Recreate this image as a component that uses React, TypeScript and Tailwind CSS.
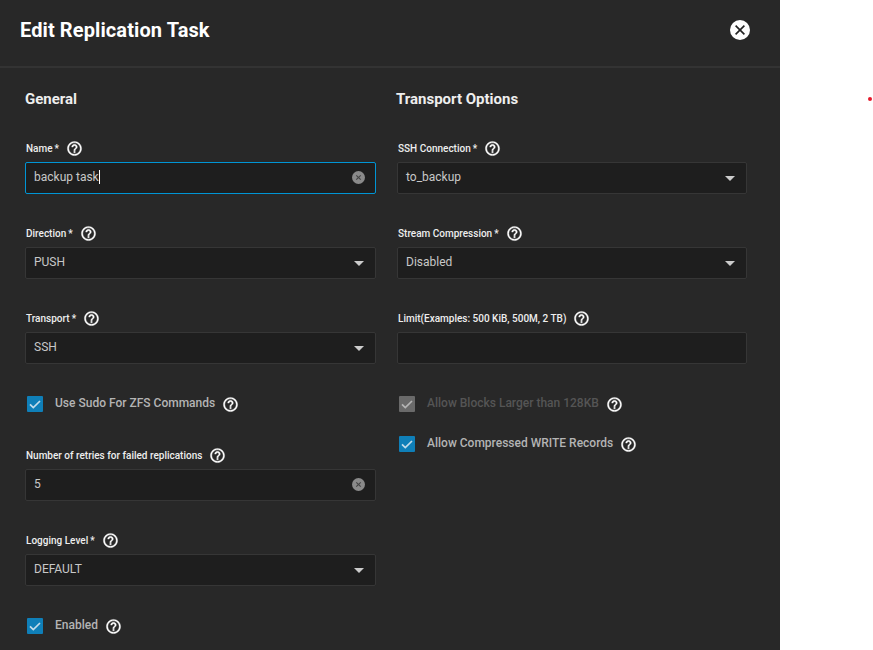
const helpPath =
  'M11 18h2v-2h-2v2zm1-16C6.48 2 2 6.48 2 12s4.48 10 10 10 10-4.48 10-10S17.52 2 12 2zm0 18c-4.41 0-8-3.59-8-8s3.59-8 8-8 8 3.59 8 8-3.59 8-8 8zm0-14c-2.21 0-4 1.79-4 4h2c0-1.1.9-2 2-2s2 .9 2 2c0 2-3 1.75-3 5h2c0-2.25 3-2.5 3-5 0-2.21-1.79-4-4-4z';

function Help({ className = '' }: { className?: string }) {
  return (
    <svg viewBox="0 0 24 24" className={`w-[17px] h-[17px] shrink-0 fill-white stroke-white stroke-[0.5] ${className}`}>
      <path d={helpPath} />
    </svg>
  );
}

function Label({ text, required }: { text: string; required?: boolean }) {
  return (
    <div className="h-5 mb-1 flex items-center pl-px text-[10px] font-medium text-[#eeeeee]">
      <span>{text}</span>
      {required && <span className="ml-[2px]">*</span>}
      <Help className="ml-[7px]" />
    </div>
  );
}

function Clear() {
  return (
    <svg viewBox="0 0 14 14" className="w-[13px] h-[13px] shrink-0 mb-px">
      <circle cx="7" cy="7" r="7" fill="#8a8a8a" />
      <path d="M4.6 4.6l4.8 4.8M9.4 4.6l-4.8 4.8" stroke="#444444" strokeWidth="1.2" />
    </svg>
  );
}

function Arrow() {
  return <div className="w-0 h-0 mr-px border-x-[5px] border-x-transparent border-t-[5px] border-t-[#cccccc]" />;
}

function Box({ focused, children }: { focused?: boolean; children?: React.ReactNode }) {
  return (
    <div
      className={`h-8 flex items-center justify-between pl-2 pr-[10px] bg-[#1e1e1e] border rounded-[2px] text-xs text-[#c8c8c8] ${
        focused ? 'border-[#0095d5]' : 'border-[#363636]'
      }`}
    >
      {children}
    </div>
  );
}

function TextField({ label, value, required, focused }: { label: string; value: string; required?: boolean; focused?: boolean }) {
  return (
    <div className="mb-[29px]">
      <Label text={label} required={required} />
      <Box focused={focused}>
        <span className="flex items-center pb-[2px]">
          {value}
          {focused && <span className="w-px h-[14px] bg-white" />}
        </span>
        {value && <Clear />}
      </Box>
    </div>
  );
}

function SelectField({ label, value, required }: { label: string; value: string; required?: boolean }) {
  return (
    <div className="mb-[29px]">
      <Label text={label} required={required} />
      <Box>
        <span className="pb-[2px]">{value}</span>
        <Arrow />
      </Box>
    </div>
  );
}

function Check({ label, disabled, className = '' }: { label: string; disabled?: boolean; className?: string }) {
  return (
    <div className={`h-4 flex items-center pl-[2px] ${className}`}>
      <div className={`w-4 h-4 shrink-0 rounded-[1px] flex items-center justify-center ${disabled ? 'bg-[#6a6a6a]' : 'bg-[#0f7fb8]'}`}>
        <svg viewBox="0 0 16 16" className="w-4 h-4">
          <path d="M3 8.4l3.3 3.2L13 5" fill="none" stroke={disabled ? '#b5b5b5' : '#c4dcea'} strokeWidth="1.7" />
        </svg>
      </div>
      <span className={`ml-3 pb-[2px] text-xs font-medium ${disabled ? 'text-[#555555]' : 'text-[#b4b4b4]'}`}>{label}</span>
      <Help className="ml-[7px]" />
    </div>
  );
}

export default function App() {
  return (
    <div className="relative w-[873px] h-[650px] overflow-hidden bg-white font-['Roboto',sans-serif]">
      <div className="w-[780px] h-[650px] overflow-hidden bg-[#282828]">
        <header className="h-[68px] border-b-2 border-[#333333] flex items-center justify-between pl-5 pr-[30px] pb-[7px]">
          <h1 className="text-xl font-bold tracking-[0.1px] text-white">Edit Replication Task</h1>
          <button className="w-5 h-5 rounded-full bg-white flex items-center justify-center">
            <svg viewBox="0 0 12 12" className="w-3 h-3">
              <path d="M1.6 1.6l8.8 8.8M10.4 1.6l-8.8 8.8" stroke="#222222" strokeWidth="1.6" />
            </svg>
          </button>
        </header>
        <div className="flex gap-[21px] pl-[25px]">
          <section className="w-[351px]">
            <h2 className="h-[70px] pt-[21px] text-[15px] font-bold leading-5 text-[#eeeeee]">General</h2>
            <TextField label="Name" value="backup task" required focused />
            <SelectField label="Direction" value="PUSH" required />
            <SelectField label="Transport" value="SSH" required />
            <Check label="Use Sudo For ZFS Commands" className="mt-8 mb-[33px]" />
            <TextField label="Number of retries for failed replications" value="5" />
            <SelectField label="Logging Level" value="DEFAULT" required />
            <Check label="Enabled" className="mt-8" />
          </section>
          <section className="w-[350px]">
            <h2 className="h-[70px] pt-[21px] -ml-px text-[15px] font-bold leading-5 text-[#eeeeee]">Transport Options</h2>
            <SelectField label="SSH Connection" value="to_backup" required />
            <SelectField label="Stream Compression" value="Disabled" required />
            <TextField label="Limit(Examples: 500 KiB, 500M, 2 TB)" value="" />
            <Check label="Allow Blocks Larger than 128KB" disabled className="mt-8 mb-6" />
            <Check label="Allow Compressed WRITE Records" />
          </section>
        </div>
      </div>
      <div className="absolute left-[868px] top-[97px] w-1 h-1 rounded-full bg-[#e5192b]" />
    </div>
  );
}
